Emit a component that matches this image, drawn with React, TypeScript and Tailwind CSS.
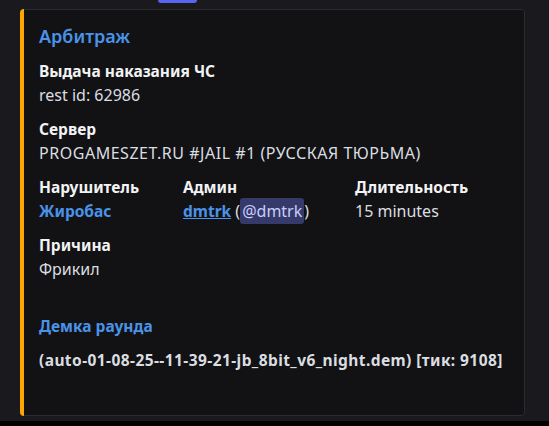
export default function App() {
  const font = { fontFamily: '"Noto Sans", "Open Sans", sans-serif' };
  const name = "text-[15.5px] leading-[20px] font-bold text-[#f2f3f5]";
  const value = "mt-[4px] text-[16px] leading-[20px] text-[#dbdee1]";
  return (
    <div className="w-[549px] h-[426px] bg-[#1a1a1e] flex flex-col overflow-hidden" style={font}>
      <div className="h-[3px] pl-[158px] flex">
        <div className="w-[39px] h-[3px] bg-[#5865f2] rounded-b-[3px]" />
      </div>
      <div className="mt-[6px] ml-[20px] w-[505px] h-[407px] flex rounded-[4px] overflow-hidden">
        <div className="w-[4px] bg-[#ffa500] shrink-0" />
        <div className="flex-1 bg-[#121214] border border-l-0 border-[#2b2b30] rounded-r-[4px] pl-[15px] pt-[15px] flex flex-col">
          <div className="text-[18px] leading-[22px] font-semibold text-[#4a93e8]">Арбитраж</div>

          <div className={"mt-[14px] " + name}>Выдача наказания ЧС</div>
          <div className={value}>rest id: 62986</div>

          <div className={"mt-[14px] " + name}>Сервер</div>
          <div className={value + " tracking-[0.53px] whitespace-nowrap"}>PROGAMESZET.RU #JAIL #1 (РУССКАЯ ТЮРЬМА)</div>

          <div className="mt-[14px] grid grid-cols-[144px_172px_1fr]">
            <div className="flex flex-col">
              <div className={name}>Нарушитель</div>
              <div className="mt-[4px] text-[15.5px] leading-[20px] font-bold text-[#4a93e8]">Жиробас</div>
            </div>
            <div className="flex flex-col">
              <div className={name}>Админ</div>
              <div className={value + " whitespace-nowrap"}>
                <span className="font-bold text-[15.5px] text-[#4a93e8] underline">dmtrk</span>
                <span> (</span>
                <span className="bg-[#363a6b] text-[#c9cdfb] rounded-[3px] px-[2px] py-[2px]">@dmtrk</span>
                <span>)</span>
              </div>
            </div>
            <div className="flex flex-col">
              <div className={name}>Длительность</div>
              <div className={value}>15 minutes</div>
            </div>
          </div>

          <div className={"mt-[14px] " + name}>Причина</div>
          <div className={value}>Фрикил</div>

          <div className="mt-[37px] text-[15.5px] leading-[20px] font-bold text-[#4a93e8]">Демка раунда</div>
          <div className="mt-[14px] text-[15.5px] leading-[20px] font-bold text-[#dbdee1] whitespace-nowrap tracking-[0.42px]">(auto-01-08-25--11-39-21-jb_8bit_v6_night.dem) [тик: 9108]</div>
        </div>
      </div>
      <div className="mt-[5px] flex-1 bg-[#000000]" />
    </div>
  );
}
